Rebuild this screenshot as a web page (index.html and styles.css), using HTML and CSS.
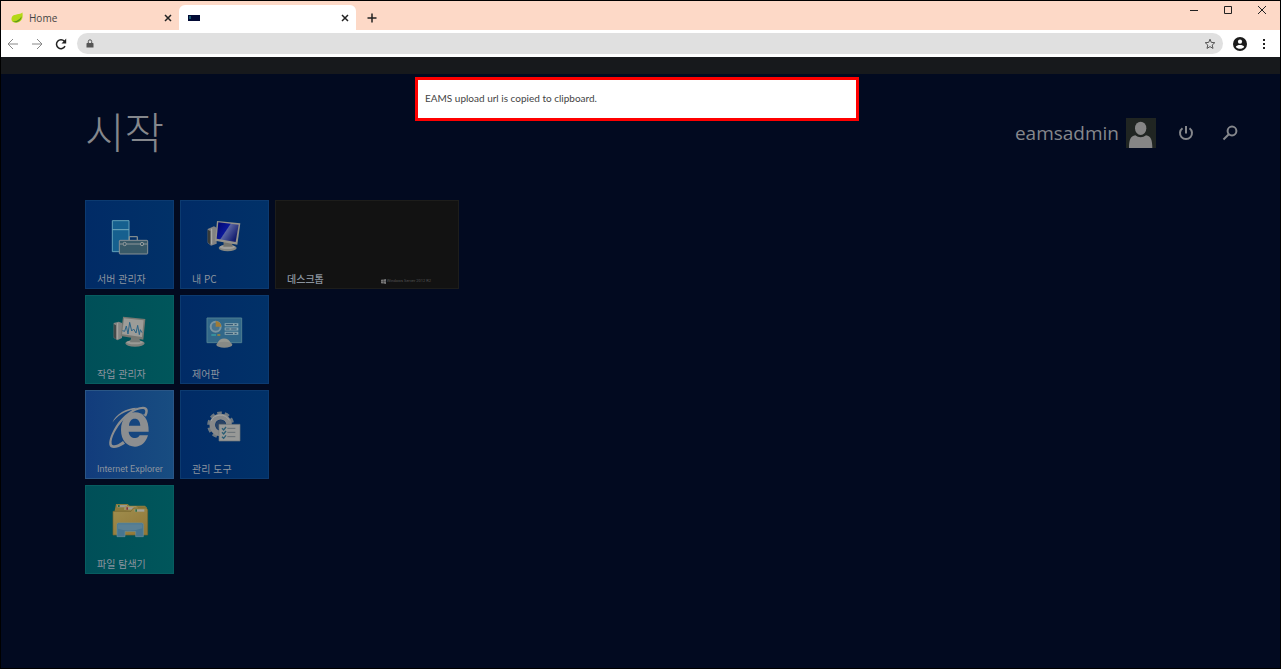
FILE: index.html
```html
<!DOCTYPE html>
<html lang="ko">
<head>
    <meta charset="UTF-8">
    <meta name="viewport" content="width=device-width, initial-scale=1.0">
    <title>EAMS</title>
    <link rel="stylesheet" href="styles.css">
</head>
<body>

<header class="browser">
    <div class="tab-strip">
        <div class="tab">
            <svg class="tab-icon" viewBox="0 0 12 12"><path d="M11.4 0.6C9 3 3.500 1.800 1.200 4.600C-0.200 6.600 0.600 9 2 10C5 11.800 9.500 10.500 11 7C11.800 5 11.800 2.500 11.400 0.600Z" fill="#b5d816"/><path d="M1.500 9.600C5 9.500 8.500 8 10.600 4.200C10.500 8.500 6 11.800 1.500 9.600Z" fill="#5f961c"/></svg>
            <span>Home</span>
            <button class="tab-close" aria-label="Close tab"><svg viewBox="0 0 8 8"><path d="M1 1L7 7M7 1L1 7"/></svg></button>
        </div>
        <div class="tab active">
            <svg class="tab-icon" viewBox="0 0 12 12"><rect y="3" width="12" height="6" fill="#020a35"/><path d="M1 4H3V7H1Z" fill="#17566b"/></svg>
            <button class="tab-close" aria-label="Close tab"><svg viewBox="0 0 8 8"><path d="M1 1L7 7M7 1L1 7"/></svg></button>
        </div>
        <button class="new-tab" aria-label="New tab"><svg viewBox="0 0 10 10"><path d="M5 0.500V9.500M0.500 5H9.500"/></svg></button>
        <div class="window-buttons">
            <button aria-label="Minimize"><svg viewBox="0 0 10 10"><path d="M1 5.500H9"/></svg></button>
            <button aria-label="Maximize"><svg viewBox="0 0 10 10"><path d="M1.500 1.500H8.500V8.500H1.500Z"/></svg></button>
            <button aria-label="Close"><svg viewBox="0 0 10 10"><path d="M1 1L9 9M9 1L1 9"/></svg></button>
        </div>
    </div>
    <div class="toolbar">
        <button class="nav-button" aria-label="Back"><svg viewBox="0 0 12 12"><path d="M11 6H1.500M6 1L1 6L6 11"/></svg></button>
        <button class="nav-button" aria-label="Forward"><svg viewBox="0 0 12 12"><path d="M1 6H10.500M6 1L11 6L6 11"/></svg></button>
        <button class="nav-button reload" aria-label="Reload"><svg viewBox="0 0 12 12"><path d="M10 8.200A4.500 4.500 0 1 1 9.400 3.200"/><path class="solid" d="M11.200 0.600V5.500H6.500Z"/></svg></button>
        <div class="address-bar">
            <svg class="lock" viewBox="0 0 8 10"><path d="M1 4H7Q7.500 4 7.500 5V8.500H0.500V5Q0.500 4 1 4Z" fill="#555"/><path d="M2.300 4V2.500A1.700 1.700 0 0 1 5.700 2.500V4" fill="none" stroke="#555"/></svg>
            <input type="text" aria-label="Address">
            <button class="star" aria-label="Bookmark"><svg viewBox="0 0 12 12"><path d="M6 1.200L7.300 4.400L10.800 4.700L8.200 7L9 10.400L6 8.600L3 10.400L3.800 7L1.200 4.700L4.700 4.400Z"/></svg></button>
        </div>
        <button class="profile" aria-label="Profile"><svg viewBox="0 0 14 14"><circle cx="7" cy="7" r="7" fill="#1b1b1b"/><circle cx="7" cy="4.700" r="2.100" fill="#fff"/><path d="M2.800 9.700C4 7.500 10 7.500 11.200 9.700C9.500 12.400 4.500 12.400 2.800 9.700Z" fill="#fff"/></svg></button>
        <button class="more" aria-label="Menu"><svg viewBox="0 0 4 12"><path d="M1 1H3V3H1ZM1 5H3V7H1ZM1 9H3V11H1Z" fill="#222"/></svg></button>
    </div>
</header>

<main class="screen">
    <div class="start-header">
        <h1>시작</h1>
        <div class="user">
            <span class="user-name">eamsadmin</span>
            <svg class="avatar" viewBox="0 0 90 90"><path d="M0 0H90V90H0Z" fill="#202522"/><ellipse cx="44" cy="31" rx="17" ry="20" fill="#858585"/><path d="M9 90C9 68 13 54 28 52C37 60 51 60 60 52C75 54 79 68 79 90Z" fill="#858585"/></svg>
            <button class="icon-button" aria-label="Power"><svg viewBox="0 0 16 16"><path d="M4.500 3.200A6 6 0 1 0 11.500 3.200M8 1V8.500"/></svg></button>
            <button class="icon-button" aria-label="Search"><svg viewBox="0 0 16 16"><circle cx="10" cy="6" r="4.400"/><path d="M6.800 9.300L1.500 14.500"/></svg></button>
        </div>
    </div>

    <div class="tiles">
        <div class="tile-group">
            <a class="tile" href="#">
                <svg viewBox="75 51 147 147"><path d="M97 77H147V170H97Z" fill="#16608f" stroke="#62a0b8" stroke-width="3"/><path d="M97 104H147" stroke="#73a9bc" stroke-width="3"/><path d="M148 136V127Q148 125 150 125H170Q172 125 172 127V136" fill="none" stroke="#808b8f" stroke-width="4"/><rect x="118" y="136" width="85" height="41" rx="2" fill="#385968" stroke="#879094" stroke-width="3"/><path d="M119 147H128M140 147H180M192 147H202" stroke="#8e9799" stroke-width="3"/><circle cx="134" cy="147" r="5" fill="#385968" stroke="#949b9d" stroke-width="3"/><circle cx="186" cy="147" r="5" fill="#385968" stroke="#949b9d" stroke-width="3"/></svg>
                <span>서버 관리자</span>
            </a>
            <a class="tile" href="#">
                <svg viewBox="360 51 147 147">
                    <linearGradient id="pc-screen" x2="1" y2="0.600"><stop offset="0" stop-color="#02056c"/><stop offset="0.480" stop-color="#0a1799"/><stop offset="0.520" stop-color="#5964a1"/><stop offset="1" stop-color="#101a6d"/></linearGradient>
                    <path d="M383 102L402 94L410 98V146L393 152L383 143Z" fill="#828282"/><path d="M383 104L391 108V149L383 142Z" fill="#373b39"/><path d="M395 101V148" stroke="#b0b0ab" stroke-width="3"/><ellipse cx="443" cy="159" rx="27" ry="10" fill="#858782"/><ellipse cx="442" cy="156" rx="23" ry="6" fill="#a09f9b"/><path d="M431 137H455L458 155H430Z" fill="#73746f"/><path d="M411 78L481 85L472 149L405 137Z" fill="#94928b"/><path d="M415 82L476 89L467 141L410 131Z" fill="url(#pc-screen)"/>
                </svg>
                <span>내 PC</span>
            </a>
            <a class="tile teal" href="#">
                <svg viewBox="75 51 147 147"><path d="M101 99L116 95L126 99V144L112 151L101 143Z" fill="#858583"/><path d="M101 102L108 106V148L101 142Z" fill="#434848"/><path d="M113 99V147" stroke="#aaa8a3" stroke-width="3"/><ellipse cx="165" cy="160" rx="29" ry="10" fill="#7f817c"/><ellipse cx="164" cy="157" rx="25" ry="6" fill="#9a9a95"/><path d="M154 141H177L181 157H150Z" fill="#777a76"/><path d="M129 80L196 87L190 149L122 138Z" fill="#777872"/><path d="M132 85L191 91L186 141L126 133Z" fill="#9c9c98"/><path d="M127 122L134 124L139 108L144 132L149 97L155 123L161 117L168 129L173 106L178 134L181 119L186 128" fill="none" stroke="#2a6386" stroke-width="3"/></svg>
                <span>작업 관리자</span>
            </a>
            <a class="tile" href="#">
                <svg viewBox="360 51 147 147"><path d="M381 84H485V158H381Z" fill="#326889" stroke="#4f7e91" stroke-width="3"/><circle cx="407" cy="110" r="15" fill="#47738e" stroke="#7995a2" stroke-width="6"/><path d="M407 110V93A17 17 0 0 1 424 110Z" fill="#a07b36"/><path d="M394 135H408" stroke="#3898a1" stroke-width="5"/><path d="M412 135H421" stroke="#9b843d" stroke-width="5"/><path d="M434 104H475M434 117H475M434 130H475" stroke="#8ba7b1" stroke-width="9"/><path d="M437 104H470M437 117H470M437 130H470" stroke="#254c6d" stroke-width="3"/><path d="M459 100L465 104L459 108ZM449 113L455 117L449 121ZM459 126L465 130L459 134Z" fill="#91a5a7"/><path d="M412 162C417 140 447 140 453 162Z" fill="#969790"/><ellipse cx="433" cy="164" rx="24" ry="9" fill="#888a86"/></svg>
                <span>제어판</span>
            </a>
            <a class="tile light" href="#">
                <svg viewBox="0 0 147 147"><path d="M131 89H71C72 101 80 108 91 108C97 108 102 105 104 100H129C123 122 108 134 90 134C66 134 48 115 48 84C48 52 66 31 90 31C116 31 132 53 131 89ZM72 71H106C105 58 100 50 89 50C79 50 73 58 72 71Z" fill="#8c8e90" fill-rule="evenodd"/><path d="M106 33L123 44C131 30 132 14 114 14C88 14 52 41 34 70C20 92 11 115 13 128C16 143 37 140 60 125L54 117C38 130 23 134 20 125C17 110 34 76 57 52C78 30 101 19 115 21C123 22 122 34 117 38Z" fill="#8c8e90"/><path d="M22 62C32 36 64 17 96 17L86 23C61 26 36 41 22 62Z" fill="#8c8e90"/></svg>
                <span>Internet Explorer</span>
            </a>
            <a class="tile" href="#">
                <svg viewBox="360 51 147 147"><circle cx="422" cy="120" r="34" fill="none" stroke="#6d7881" stroke-width="13" stroke-dasharray="13 8.360"/><circle cx="422" cy="120" r="25" fill="none" stroke="#87898a" stroke-width="17"/><circle cx="422" cy="120" r="15" fill="#294263"/><path d="M393 108A31 31 0 0 1 448 106" fill="none" stroke="#a1a3a3" stroke-width="3"/><path d="M417 118H480V168H417Z" fill="#989997" stroke="#6e7678" stroke-width="2"/><path d="M442 130H466M442 142H466M442 155H466" stroke="#676f76" stroke-width="3"/><path d="M426 130L431 135L438 126M426 142L431 147L438 138M426 155L431 160L438 151" fill="none" stroke="#2c5e75" stroke-width="4"/></svg>
                <span>관리 도구</span>
            </a>
            <a class="tile teal" href="#">
                <svg viewBox="75 51 147 147">
                    <linearGradient id="folder" x2="0.700" y2="1"><stop offset="0" stop-color="#a08e4e"/><stop offset="1" stop-color="#927939"/></linearGradient>
                    <path d="M103 97L108 72H143L149 77H195L201 83V163H103Z" fill="#8b7a3c"/><path d="M112 75H141V82H112Z" fill="#989990"/><path d="M114 75H119V81H114Z" fill="#276f42"/><path d="M132 90V81L138 78H168L174 83V94Z" fill="#a18f57"/><path d="M137 82H162V88H137Z" fill="#9c9c96"/><path d="M139 82H144V89H139Z" fill="#87363a"/><path d="M99 94H153L160 84H199L203 89V165H99Z" fill="url(#folder)" stroke="#75652e" stroke-width="2"/><path d="M164 88H193V95H164Z" fill="#a2a39b"/><path d="M166 88H171V95H166Z" fill="#2f6f43"/><path d="M111 170V133Q111 129 116 129H185Q190 129 190 133V170H167V154H135V170Z" fill="#477590" stroke="#688e9c" stroke-width="2"/><path d="M114 133H187V145Q151 158 114 146Z" fill="#6c8c99" opacity="0.500"/>
                </svg>
                <span>파일 탐색기</span>
            </a>
        </div>
        <a class="tile desktop" href="#">
            <span>데스크톱</span>
            <span class="edition"><svg viewBox="0 0 10 10"><path d="M0 1.500L4.500 1V4.700H0ZM5 0.900L10 0V4.700H5ZM0 5.200H4.500V9L0 8.500ZM5 5.200H10V10L5 9.100Z" fill="#777"/></svg>Windows Server 2012 R2</span>
        </a>
    </div>

    <div class="toast" role="status">EAMS upload url is copied to clipboard.</div>
</main>

</body>
</html>
```
FILE: styles.css
```css
* {
    box-sizing: border-box;
}

body {
    margin: 0;
    min-height: 100vh;
    display: flex;
    flex-direction: column;
    border: 1px solid #000;
    background-color: #020a20;
    font-family: "Open Sans", "Noto Sans CJK KR", sans-serif;
    font-size: 10px;
}

svg {
    display: block;
    flex: none;
}

button {
    display: flex;
    align-items: center;
    justify-content: center;
    padding: 0;
    border: none;
    background: none;
    cursor: pointer;
}

button svg {
    fill: none;
    stroke: #222;
}

/* Browser */
.tab-strip {
    display: flex;
    height: 29px;
    padding-top: 4px;
    background-color: #fdd9c7;
}

.tab {
    display: flex;
    align-items: center;
    gap: 6px;
    width: 178px;
    padding: 0 7px 0 10px;
    color: #444;
}

.tab.active {
    width: 177px;
    padding-left: 9px;
    background-color: #fff;
    border-radius: 6px 6px 0 0;
}

.tab-icon {
    width: 12px;
    height: 12px;
}

.tab-close {
    margin-left: auto;
}

.tab-close svg {
    width: 8px;
    height: 8px;
    stroke-width: 1.5;
}

.new-tab {
    width: 32px;
}

.new-tab svg {
    width: 10px;
    height: 10px;
    stroke-width: 1.5;
}

.window-buttons {
    display: flex;
    gap: 24px;
    height: 10px;
    margin-left: auto;
    padding-right: 13px;
}

.window-buttons svg {
    width: 10px;
    height: 10px;
}

.toolbar {
    display: flex;
    align-items: center;
    height: 27px;
    padding: 0 14px 0 6px;
    background-color: #fff;
}

.nav-button {
    width: 12px;
    margin-right: 12px;
}

.nav-button svg {
    width: 12px;
    height: 12px;
    stroke: #888;
}

.nav-button.reload {
    margin-right: 10px;
}

.nav-button.reload svg {
    stroke: #222;
    stroke-width: 1.5;
}

.nav-button .solid {
    fill: #222;
    stroke: none;
}

.address-bar {
    display: flex;
    align-items: center;
    flex: 1;
    height: 21px;
    padding: 0 7px 0 9px;
    border-radius: 11px;
    background-color: #e0e0e0;
}

.lock {
    width: 8px;
    height: 10px;
}

.address-bar input {
    flex: 1;
    min-width: 0;
    padding: 0 8px;
    border: none;
    outline: none;
    background: none;
    font: inherit;
}

.star svg {
    width: 12px;
    height: 12px;
    stroke: #555;
}

.profile {
    margin: 0 15px 0 10px;
}

.profile svg {
    width: 14px;
    height: 14px;
    stroke: none;
}

.more svg {
    width: 4px;
    height: 12px;
    stroke: none;
}

/* Start screen */
.screen {
    position: relative;
    flex: 1;
    padding: 28px 42px 40px 84px;
    border-top: 17px solid #17191c;
    color: #85878c;
}

.start-header {
    display: flex;
    align-items: flex-start;
    justify-content: space-between;
    height: 60px;
    margin-bottom: 38px;
}

h1 {
    margin: 0;
    font-family: "Noto Sans CJK KR", sans-serif;
    font-size: 43px;
    font-weight: 300;
    line-height: 56px;
}

.user {
    display: flex;
    align-items: center;
    padding-top: 16px;
}

.user-name {
    font-size: 19px;
    line-height: 30px;
}

.avatar {
    width: 30px;
    height: 30px;
    margin: 0 14px 0 7px;
}

.icon-button {
    width: 32px;
}

.icon-button + .icon-button {
    width: 16px;
    margin-left: 20px;
}

.icon-button svg {
    width: 16px;
    height: 16px;
    stroke: #85878c;
    stroke-width: 2;
}

.tiles {
    display: flex;
    align-items: flex-start;
    gap: 6px;
}

.tile-group {
    display: grid;
    grid-template-columns: 89px 89px;
    gap: 6px;
}

.tile {
    display: flex;
    flex-direction: column;
    justify-content: space-between;
    height: 89px;
    padding: 11px 11px 2px;
    border: 1px solid #0c3a70;
    background: linear-gradient(to right, #012b66, #013168);
    color: #8b949f;
    font-family: "Noto Sans CJK KR", sans-serif;
    line-height: 14px;
    text-decoration: none;
    white-space: nowrap;
}

.tile > svg {
    width: 49px;
    height: 49px;
    margin-left: 8px;
}

.tile.teal {
    border-color: #075d60;
    background: linear-gradient(to right, #004f58, #00565b);
}

.tile.light {
    border-color: #2a5686;
    background: linear-gradient(to right, #123c7c, #184d81);
    font-family: Roboto, sans-serif;
    font-size: 9px;
}

.tile.desktop {
    flex-direction: row;
    align-items: flex-end;
    width: 184px;
    padding-right: 27px;
    border-color: #1d1d1b;
    background: #121212;
    font-weight: 500;
}

.edition {
    display: flex;
    align-items: center;
    gap: 1px;
    color: #555;
    font-family: Roboto, sans-serif;
    font-size: 4px;
    font-weight: 400;
    line-height: 10px;
}

.edition svg {
    width: 5px;
    height: 5px;
}

.toast {
    position: absolute;
    top: 3px;
    left: 414px;
    width: 444px;
    padding: 8px 7px 10px;
    border: 3px solid #f00;
    background-color: #fff;
    color: #444;
    font-family: Lato, sans-serif;
    line-height: 20px;
}
```
